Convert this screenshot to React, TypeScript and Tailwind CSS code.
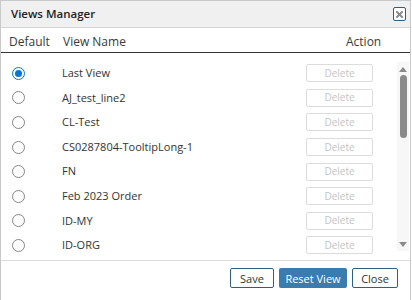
import React from "react";

const rows = [
  "Last View",
  "AJ_test_line2",
  "CL-Test",
  "CS0287804-TooltipLong-1",
  "FN",
  "Feb 2023 Order",
  "ID-MY",
  "ID-ORG",
];

export default function App() {
  return (
    <div
      className="w-[412px] h-[300px] bg-white overflow-hidden"
      style={{ fontFamily: '"Open Sans", "Noto Sans", sans-serif' }}
    >
      <div className="w-[411px] h-[320px] border border-[#c9c9c9] flex flex-col">
        {/* title bar */}
        <div className="h-[27px] shrink-0 bg-[#f0f0f0] border-b border-[#d6d6d6] flex items-center justify-between pl-[10px] pr-[4px]">
          <span className="text-[11.5px] font-semibold text-[#222]">Views Manager</span>
          <button className="w-[13px] h-[14px] border border-[#2d5f86] rounded-[2px] bg-white flex items-center justify-center">
            <svg width="7" height="7" viewBox="0 0 7 7">
              <path d="M1 1 L6 6 M6 1 L1 6" stroke="#8c8c8c" strokeWidth="2" strokeLinecap="square" />
            </svg>
          </button>
        </div>
        {/* header */}
        <div className="h-[25px] shrink-0 border-b border-[#333] flex items-center text-[12px] text-[#3a3a3a] pt-[3px]">
          <div className="w-[62px] pl-[8px]">Default</div>
          <div className="flex-1">View Name</div>
          <div className="w-[64px]">Action</div>
        </div>
        {/* list */}
        <div className="h-[208px] shrink-0 flex border-b border-[#dcdcdc]">
          <div className="flex-1 pt-[8px]">
            {rows.map((r, i) => (
              <div key={r} className="h-[24.6px] flex items-center">
                <div className="w-[61px] pl-[11px] flex items-center">
                  {i === 0 ? (
                    <div className="w-[13px] h-[13px] rounded-full border border-[#0a74d0] flex items-center justify-center">
                      <div className="w-[7px] h-[7px] rounded-full bg-[#0a74d0]" />
                    </div>
                  ) : (
                    <div className="w-[13px] h-[13px] rounded-full border border-[#858585]" />
                  )}
                </div>
                <div className="flex-1 text-[11px] text-[#333]">{r}</div>
                <div className="w-[91px] flex items-center">
                  <div className="w-[67px] h-[18px] border border-[#dcdcdc] rounded-[2px] flex items-center justify-center text-[10px] text-[#c4c4c4]">
                    Delete
                  </div>
                </div>
              </div>
            ))}
          </div>
          <div className="w-[12px] mr-[1px] mt-[9px] mb-[9px] bg-[#f7f7f7] flex flex-col items-center">
            <svg width="8" height="5" viewBox="0 0 8 5" className="mt-[5px]">
              <path d="M0 5 L4 0 L8 5 Z" fill="#8a8a8a" />
            </svg>
            <div className="w-[7px] h-[63px] mt-[3px] rounded-full bg-[#8a8a8a]" />
            <div className="flex-1" />
            <svg width="8" height="5" viewBox="0 0 8 5" className="mb-[4px]">
              <path d="M0 0 L8 0 L4 5 Z" fill="#8a8a8a" />
            </svg>
          </div>
        </div>
        {/* footer */}
        <div className="flex justify-end gap-[5px] pr-[12px] pt-[7px]">
          <button className="w-[44px] h-[20px] border border-[#2d5f86] rounded-[2px] text-[11px] text-[#333] bg-white leading-none">
            Save
          </button>
          <button className="w-[68px] h-[20px] rounded-[2px] text-[11px] text-white bg-[#3a7cb0] leading-none">
            Reset View
          </button>
          <button className="w-[46px] h-[20px] border border-[#2d5f86] rounded-[2px] text-[11px] text-[#333] bg-white leading-none">
            Close
          </button>
        </div>
      </div>
    </div>
  );
}
